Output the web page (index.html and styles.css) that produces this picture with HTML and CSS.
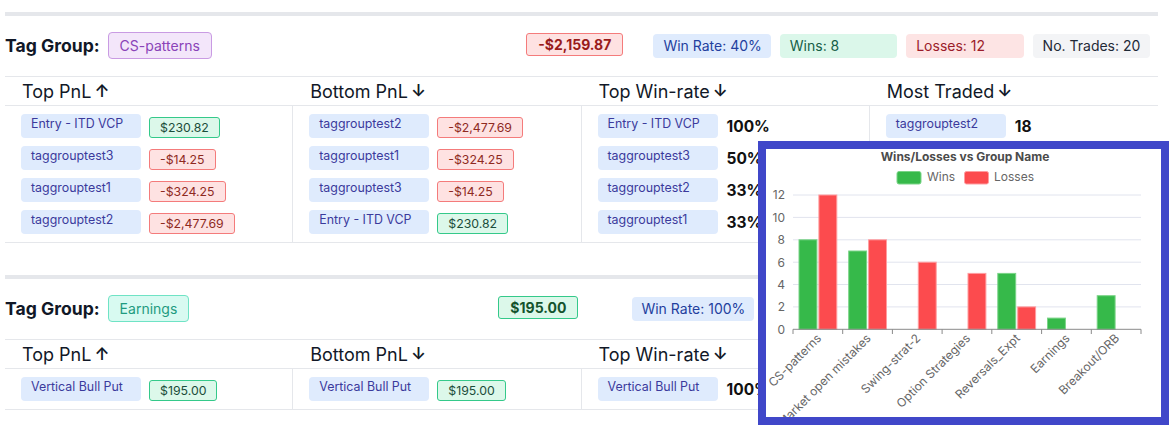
FILE: index.html
```html
<!DOCTYPE html>
<html lang="en">
<head>
<meta charset="utf-8">
<title>Tag Groups</title>
<link rel="stylesheet" href="styles.css">
</head>
<body>
<div class="page">
  <section class="group">
    <div class="group-bar"></div>
    <div class="group-head">
      <h2 class="group-title">Tag Group:</h2>
      <span class="tag tag-purple">CS-patterns</span>
      <span class="total total-neg total-first">-$2,159.87</span>
      <div class="stats">
        <span class="stat stat-blue">Win Rate: 40%</span>
        <span class="stat stat-green">Wins: 8</span>
        <span class="stat stat-red">Losses: 12</span>
        <span class="stat stat-gray">No. Trades: 20</span>
      </div>
    </div>
    <div class="grid">
      <div class="col-head">Top PnL <span class="arrow">↑</span></div>
      <div class="col-head">Bottom PnL <span class="arrow">↓</span></div>
      <div class="col-head">Top Win-rate <span class="arrow">↓</span></div>
      <div class="col-head">Most Traded <span class="arrow">↓</span></div>
      <div class="col-body">
        <div class="item"><span class="pill">Entry - ITD VCP</span><span class="val pos">$230.82</span></div>
        <div class="item"><span class="pill">taggrouptest3</span><span class="val neg">-$14.25</span></div>
        <div class="item"><span class="pill">taggrouptest1</span><span class="val neg">-$324.25</span></div>
        <div class="item"><span class="pill">taggrouptest2</span><span class="val neg">-$2,477.69</span></div>
      </div>
      <div class="col-body">
        <div class="item"><span class="pill">taggrouptest2</span><span class="val neg">-$2,477.69</span></div>
        <div class="item"><span class="pill">taggrouptest1</span><span class="val neg">-$324.25</span></div>
        <div class="item"><span class="pill">taggrouptest3</span><span class="val neg">-$14.25</span></div>
        <div class="item"><span class="pill">Entry - ITD VCP</span><span class="val pos">$230.82</span></div>
      </div>
      <div class="col-body">
        <div class="item"><span class="pill">Entry - ITD VCP</span><span class="num">100%</span></div>
        <div class="item"><span class="pill">taggrouptest3</span><span class="num">50%</span></div>
        <div class="item"><span class="pill">taggrouptest2</span><span class="num">33%</span></div>
        <div class="item"><span class="pill">taggrouptest1</span><span class="num">33%</span></div>
      </div>
      <div class="col-body">
        <div class="item"><span class="pill">taggrouptest2</span><span class="num">18</span></div>
      </div>
    </div>
  </section>

  <section class="group">
    <div class="group-bar"></div>
    <div class="group-head">
      <h2 class="group-title">Tag Group:</h2>
      <span class="tag tag-teal">Earnings</span>
      <span class="total total-pos total-second">$195.00</span>
      <div class="stats stats-wide">
        <span class="stat stat-blue">Win Rate: 100%</span>
        <span class="stat stat-green">Wins: 1</span>
        <span class="stat stat-red">Losses: 0</span>
        <span class="stat stat-gray">No. Trades: 1</span>
      </div>
    </div>
    <div class="grid">
      <div class="col-head">Top PnL <span class="arrow">↑</span></div>
      <div class="col-head">Bottom PnL <span class="arrow">↓</span></div>
      <div class="col-head">Top Win-rate <span class="arrow">↓</span></div>
      <div class="col-head">Most Traded <span class="arrow">↓</span></div>
      <div class="col-body">
        <div class="item"><span class="pill">Vertical Bull Put</span><span class="val pos">$195.00</span></div>
      </div>
      <div class="col-body">
        <div class="item"><span class="pill">Vertical Bull Put</span><span class="val pos">$195.00</span></div>
      </div>
      <div class="col-body">
        <div class="item"><span class="pill">Vertical Bull Put</span><span class="num">100%</span></div>
      </div>
      <div class="col-body">
        <div class="item"><span class="pill">Vertical Bull Put</span><span class="num">1</span></div>
      </div>
    </div>
  </section>
</div>

<div class="chart-pop">
  <svg class="chart" width="395" height="268" viewBox="0 0 395 268" xmlns="http://www.w3.org/2000/svg">
    <text x="199" y="12" class="c-title" text-anchor="middle">Wins/Losses vs Group Name</text>
    <rect x="131" y="22.5" width="24" height="12.5" rx="2" class="b-green"/>
    <text x="161" y="32" class="c-legend">Wins</text>
    <rect x="198.5" y="22.5" width="24" height="12.5" rx="2" class="b-red"/>
    <text x="228" y="32" class="c-legend">Losses</text>

    <g class="grid-lines">
      <line x1="27" y1="46" x2="375" y2="46"/>
      <line x1="27" y1="68.4" x2="375" y2="68.4"/>
      <line x1="27" y1="90.8" x2="375" y2="90.8"/>
      <line x1="27" y1="113.2" x2="375" y2="113.2"/>
      <line x1="27" y1="135.5" x2="375" y2="135.5"/>
      <line x1="27" y1="157.9" x2="375" y2="157.9"/>
    </g>
    <g class="c-tick">
      <text x="19" y="50.3" text-anchor="end">12</text>
      <text x="19" y="72.7" text-anchor="end">10</text>
      <text x="19" y="95.1" text-anchor="end">8</text>
      <text x="19" y="117.5" text-anchor="end">6</text>
      <text x="19" y="139.8" text-anchor="end">4</text>
      <text x="19" y="162.2" text-anchor="end">2</text>
      <text x="19" y="184.6" text-anchor="end">0</text>
    </g>

    <rect x="33" y="90.8" width="17.9" height="89.5" class="b-green"/>
    <rect x="52.9" y="46" width="17.9" height="134.3" class="b-red"/>
    <rect x="82.7" y="102" width="17.9" height="78.3" class="b-green"/>
    <rect x="102.6" y="90.8" width="17.9" height="89.5" class="b-red"/>
    <rect x="152.3" y="113.2" width="17.9" height="67.1" class="b-red"/>
    <rect x="202" y="124.4" width="17.9" height="55.9" class="b-red"/>
    <rect x="231.8" y="124.4" width="17.9" height="55.9" class="b-green"/>
    <rect x="251.7" y="157.9" width="17.9" height="22.4" class="b-red"/>
    <rect x="281.5" y="169.1" width="17.9" height="11.2" class="b-green"/>
    <rect x="331.2" y="146.7" width="17.9" height="33.6" class="b-green"/>

    <g class="axis">
      <line x1="27" y1="180.3" x2="375" y2="180.3"/>
      <line x1="27" y1="180.3" x2="27" y2="185"/>
      <line x1="76.7" y1="180.3" x2="76.7" y2="185"/>
      <line x1="126.4" y1="180.3" x2="126.4" y2="185"/>
      <line x1="176.1" y1="180.3" x2="176.1" y2="185"/>
      <line x1="225.8" y1="180.3" x2="225.8" y2="185"/>
      <line x1="275.6" y1="180.3" x2="275.6" y2="185"/>
      <line x1="325.3" y1="180.3" x2="325.3" y2="185"/>
      <line x1="375" y1="180.3" x2="375" y2="185"/>
    </g>
    <g class="c-tick">
      <text text-anchor="end" transform="translate(56,190) rotate(-45)">CS-patterns</text>
      <text text-anchor="end" transform="translate(105.6,190) rotate(-45)">Market open mistakes</text>
      <text text-anchor="end" transform="translate(155.3,190) rotate(-45)">Swing-strat-2</text>
      <text text-anchor="end" transform="translate(205,190) rotate(-45)">Option Strategies</text>
      <text text-anchor="end" transform="translate(254.7,190) rotate(-45)">Reversals_Expt</text>
      <text text-anchor="end" transform="translate(304.4,190) rotate(-45)">Earnings</text>
      <text text-anchor="end" transform="translate(354.1,190) rotate(-45)">Breakout/ORB</text>
    </g>
  </svg>
</div>
</body>
</html>
```

FILE: styles.css
```css
* { box-sizing: border-box; }

html, body {
  margin: 0;
  padding: 0;
  background: #ffffff;
  font-family: Inter, "Noto Sans", sans-serif;
  color: #111827;
}

.page {
  width: 1153px;
  margin-left: 5px;
  padding-top: 12px;
}

.group { margin-bottom: 32px; }

.group-bar {
  height: 4px;
  background: #e5e7eb;
}

.group-head {
  display: flex;
  align-items: center;
  padding: 16px 8px 17px 0;
  border-bottom: 1px solid #e5e7eb;
}

.group-title {
  margin: 0 8px 0 0;
  font-size: 17.6px;
  font-weight: 700;
  line-height: 22px;
  color: #111827;
}

.tag {
  display: inline-flex;
  align-items: center;
  height: 27px;
  padding: 0 11px;
  border-radius: 4px;
  border: 1px solid;
  font-size: 14px;
}
.tag-purple { background: #f3e6fa; border-color: #c99be3; color: #8a43b8; }
.tag-teal { background: #d8faf1; border-color: #6fe3c5; color: #1f9b80; }

.total {
  display: inline-flex;
  align-items: center;
  height: 23px;
  padding: 0 11px;
  border-radius: 3px;
  border: 1px solid;
  font-size: 14px;
  font-weight: 700;
  margin-left: auto;
}
.total-neg { background: #fee2e2; border-color: #f47b7b; color: #991b1b; }
.total-pos { background: #dcf8ea; border-color: #34c98a; color: #14532d; }
.total-first { margin-right: 30px; margin-top: -2px; }
.total-second { margin-right: 54px; margin-top: -2px; }

.stats {
  display: grid;
  grid-auto-flow: column;
  grid-auto-columns: 1fr;
  gap: 9px;
}
.stats-wide { gap: 10px; }

.stat {
  display: flex;
  align-items: center;
  height: 24px;
  padding: 0 9px 0 10px;
  border-radius: 4px;
  font-size: 14px;
  white-space: nowrap;
}
.stats-wide .stat { padding: 0 9px; }
.stat-blue { background: #dfebfd; color: #243f9e; }
.stat-green { background: #dbf7ea; color: #155e47; }
.stat-red { background: #fde4e4; color: #9b1c2a; }
.stat-gray { background: #f3f4f6; color: #1f2937; }

.grid {
  display: grid;
  grid-template-columns: repeat(4, 1fr);
  border-bottom: 1px solid #e5e7eb;
}

.col-head {
  height: 29px;
  padding-left: 17px;
  display: flex;
  align-items: center;
  gap: 3px;
  font-size: 18px;
  color: #111827;
  border-bottom: 1px solid #e5e7eb;
}
.arrow { font-weight: 600; font-size: 17px; }

.col-body {
  display: flex;
  flex-direction: column;
  gap: 8px;
  padding: 8px 16px;
  border-right: 1px solid #e5e7eb;
}
.col-body:last-child { border-right: none; }

.item {
  display: flex;
  align-items: center;
  gap: 8px;
}

.pill {
  width: 120px;
  height: 24px;
  padding: 1px 10px 0;
  line-height: 17px;
  border-radius: 4px;
  background: #dfebfd;
  color: #3b3a9c;
  font-size: 12.4px;
  white-space: nowrap;
  overflow: hidden;
}

.val {
  display: inline-flex;
  align-items: center;
  height: 21px;
  margin-top: 3px;
  padding: 0 10px;
  border: 1px solid;
  border-radius: 3px;
  font-size: 12.3px;
}
.val.pos { background: #dcf8ea; border-color: #34c98a; color: #1b4d3a; }
.val.neg { background: #fee2e2; border-color: #f47b7b; color: #8f2a1f; }

.num {
  font-size: 15.5px;
  font-weight: 700;
  color: #111111;
  margin-left: 1px;
}

.chart-pop {
  position: fixed;
  left: 758px;
  top: 141px;
  width: 411px;
  height: 284px;
  border: 8px solid #4047c9;
  background: #ffffff;
}

.chart { display: block; overflow: hidden; font-family: Inter, "Noto Sans", sans-serif; }
.c-title { font-size: 12px; font-weight: 700; fill: #4b4b4b; }
.c-legend { font-size: 12px; fill: #666666; }
.c-tick text { font-size: 12px; fill: #666666; }
.grid-lines line { stroke: #e1e4ee; stroke-width: 1; }
.axis line { stroke: #8a8a8a; stroke-width: 1; }
.b-green { fill: #36b94a; stroke: #7ad487; stroke-width: 1; }
.b-red { fill: #fc4b4e; stroke: #ff9da0; stroke-width: 1; }
```
